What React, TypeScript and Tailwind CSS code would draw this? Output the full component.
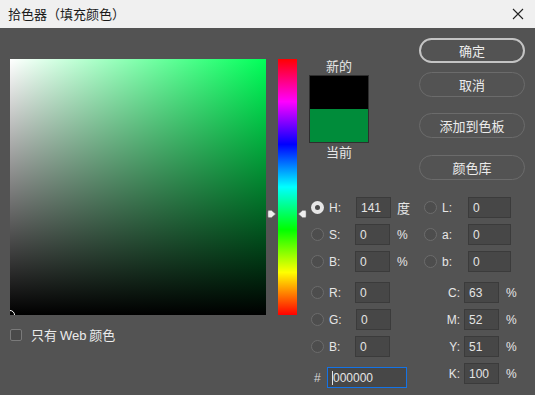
import React from "react";

const cjk = "font-['Noto_Sans_CJK_SC',sans-serif]";
const latin = "font-['Liberation_Sans','Noto_Sans_CJK_SC',sans-serif]";

const Radio: React.FC<{ checked?: boolean }> = ({ checked }) => (
  <div className="w-[18px] flex items-center">
    {checked ? (
      <div className="w-[13px] h-[13px] rounded-full bg-[#e6e6e6] flex items-center justify-center">
        <div className="w-[5px] h-[5px] rounded-full bg-[#4a4a4a]" />
      </div>
    ) : (
      <div className="w-[13px] h-[13px] rounded-full border border-[#6c6c6c] bg-[#4d4d4d]" />
    )}
  </div>
);

const Field: React.FC<{ value: string; w: string }> = ({ value, w }) => (
  <div
    className={`${w} h-[21px] bg-[#474747] border border-[#3b3b3b] flex items-center pl-[4px] text-[12px] text-[#e4e4e4] ${latin}`}
  >
    {value}
  </div>
);

const Row: React.FC<{ children: React.ReactNode; mt: string }> = ({ children, mt }) => (
  <div className={`flex items-center h-[21px] ${mt}`}>{children}</div>
);

const Btn: React.FC<{ label: string; primary?: boolean; mt: string }> = ({ label, primary, mt }) => (
  <div
    className={`w-[106px] h-[25px] rounded-full flex items-center justify-center text-[13px] text-[#ececec] ${cjk} ${mt} ${
      primary ? "border-2 border-[#c4c4c4]" : "border-[1.5px] border-[#6b6b6b]"
    }`}
  >
    {label}
  </div>
);

const Arrow: React.FC<{ dir: "right" | "left" }> = ({ dir }) => (
  <svg width="9" height="8" viewBox="0 0 9 8">
    {dir === "right" ? (
      <path d="M1 1.5 Q1 0.5 2 0.5 H4.5 L8.5 4 L4.5 7.5 H2 Q1 7.5 1 6.5 Z" fill="#eeeeee" stroke="#8a8a8a" strokeWidth="0.5" />
    ) : (
      <path d="M8 1.5 Q8 0.5 7 0.5 H4.5 L0.5 4 L4.5 7.5 H7 Q8 7.5 8 6.5 Z" fill="#eeeeee" stroke="#8a8a8a" strokeWidth="0.5" />
    )}
  </svg>
);

export default function App() {
  return (
    <div className={`w-[535px] h-[395px] bg-[#535353] flex flex-col overflow-hidden ${cjk}`}>
      {/* title bar */}
      <div className="h-[28px] bg-[#f0f0f0] flex items-center justify-between pl-[8px] pr-[11px]">
        <span className="text-[13px] text-[#1a1a1a]">拾色器（填充颜色）</span>
        <svg width="12" height="12" viewBox="0 0 12 12">
          <path d="M1 1 L11 11 M11 1 L1 11" stroke="#222" strokeWidth="1.1" />
        </svg>
      </div>

      <div className="flex pl-[10px] pt-[10px]">
        {/* colour field */}
        <div className="flex flex-col mt-[21px]">
          <div className="relative w-[256px] h-[256px] overflow-hidden bg-[linear-gradient(to_right,#ffffff,#00ff59)]">
            <div className="absolute inset-0 bg-[linear-gradient(to_top,#000000,rgba(0,0,0,0))]" />
            <div className="absolute left-[-5px] bottom-[-5px] w-[10px] h-[10px] rounded-full border-[1.5px] border-white" />
          </div>
          <div className="flex items-center mt-[14px] h-[12px]">
            <div className="w-[12px] h-[12px] border border-[#7a7a7a] bg-[#4a4a4a] rounded-[2px]" />
            <span className="ml-[9px] text-[13px] text-[#ececec]">
              只有 <span className={latin}>Web</span> 颜色
            </span>
          </div>
        </div>

        {/* hue bar */}
        <div className="relative ml-[12px] mt-[21px] w-[19px] h-[256px] bg-[linear-gradient(to_bottom,#ff0000_0%,#ff00ff_16.67%,#0000ff_33.33%,#00ffff_50%,#00ff00_66.67%,#ffff00_83.33%,#ff0000_100%)]">
          <div className="absolute left-[-11px] top-[151px]">
            <Arrow dir="right" />
          </div>
          <div className="absolute right-[-10px] top-[151px]">
            <Arrow dir="left" />
          </div>
        </div>

        {/* right side */}
        <div className="flex flex-col ml-[12px]">
          <div className="flex h-[142px]">
            <div className="flex flex-col w-[60px] items-center">
              <div className="mt-[20px] h-[16px] leading-[16px] text-[13px] text-[#e6e6e6]">新的</div>
              <div className="mt-[1px] w-[60px] h-[68px] border border-[#2e2e2e] flex flex-col">
                <div className="flex-1 bg-black" />
                <div className="flex-1 bg-[#008c3a]" />
              </div>
              <div className="mt-[1px] h-[16px] leading-[16px] text-[13px] text-[#e6e6e6]">当前</div>
            </div>
            <div className="flex flex-col ml-[50px]">
              <Btn label="确定" primary mt="" />
              <Btn label="取消" mt="mt-[9px]" />
              <Btn label="添加到色板" mt="mt-[16px]" />
              <Btn label="颜色库" mt="mt-[17px]" />
            </div>
          </div>

          <div className={`flex mt-[17px] text-[12px] text-[#e6e6e6] ${latin}`}>
            {/* left column: HSB / RGB / hex */}
            <div className="flex flex-col ml-[2px] w-[113px]">
              <Row mt="">
                <Radio checked />
                <span className="w-[27px]">H:</span>
                <Field value="141" w="w-[35px]" />
                <span className={`ml-[6px] text-[13px] ${cjk}`}>度</span>
              </Row>
              <Row mt="mt-[6px]">
                <Radio />
                <span className="w-[26px]">S:</span>
                <Field value="0" w="w-[35px]" />
                <span className="ml-[7px]">%</span>
              </Row>
              <Row mt="mt-[6px]">
                <Radio />
                <span className="w-[26px]">B:</span>
                <Field value="0" w="w-[35px]" />
                <span className="ml-[7px]">%</span>
              </Row>
              <Row mt="mt-[10px]">
                <Radio />
                <span className="w-[26px]">R:</span>
                <Field value="0" w="w-[35px]" />
              </Row>
              <Row mt="mt-[6px]">
                <Radio />
                <span className="w-[27px]">G:</span>
                <Field value="0" w="w-[35px]" />
              </Row>
              <Row mt="mt-[6px]">
                <Radio />
                <span className="w-[26px]">B:</span>
                <Field value="0" w="w-[35px]" />
              </Row>
              <Row mt="mt-[10px]">
                <span className="w-[16px] pl-[3px] text-[#d8d8d8]">#</span>
                <div className="w-[80px] h-[21px] bg-[#474747] border-[1.5px] border-[#1473e6] flex items-center pl-[4px] text-[12px] text-[#e4e4e4]">
                  <span className="w-px h-[14px] bg-[#e4e4e4]" />
                  000000
                </div>
              </Row>
            </div>

            {/* right column: Lab / CMYK */}
            <div className="flex flex-col">
              <Row mt="">
                <Radio />
                <span className="w-[26px]">L:</span>
                <Field value="0" w="w-[43px]" />
              </Row>
              <Row mt="mt-[6px]">
                <Radio />
                <span className="w-[26px]">a:</span>
                <Field value="0" w="w-[43px]" />
              </Row>
              <Row mt="mt-[6px]">
                <Radio />
                <span className="w-[26px]">b:</span>
                <Field value="0" w="w-[43px]" />
              </Row>
              {[
                ["C:", "63", "mt-[10px]"],
                ["M:", "52", "mt-[6px]"],
                ["Y:", "51", "mt-[6px]"],
                ["K:", "100", "mt-[6px]"],
              ].map(([l, v, mt]) => (
                <Row key={l} mt={mt}>
                  <span className="w-[40px] pr-[4px] text-right">{l}</span>
                  <Field value={v} w="w-[35px]" />
                  <span className="ml-[7px]">%</span>
                </Row>
              ))}
            </div>
          </div>
        </div>
      </div>
    </div>
  );
}
